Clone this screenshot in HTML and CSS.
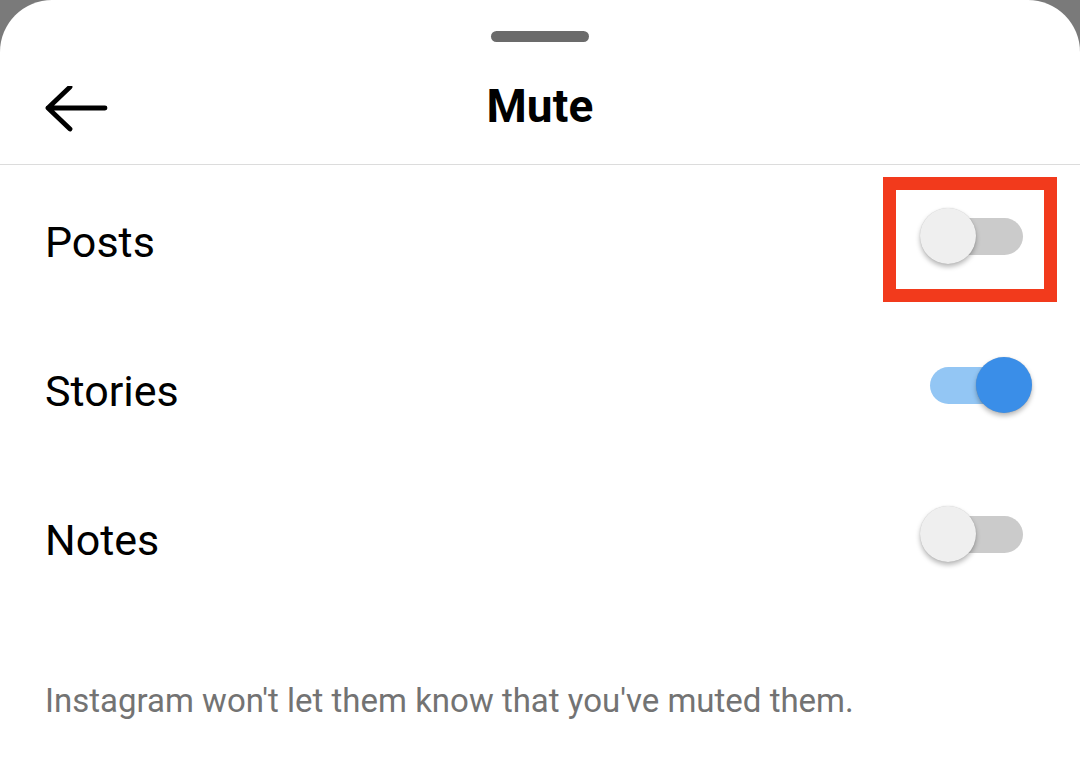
FILE: index.html
```html
<!DOCTYPE html>
<html>
<head>
	<title>Mute</title>
	<meta charset="utf-8">
	<link rel="stylesheet" href="styles.css">
</head>
<body>

	<div class="sheet">
		<div class="handle"></div>

		<div class="header">
			<svg class="back" width="64" height="50" viewBox="0 0 64 50">
				<path d="M3 22 H60 M25 1 L3 22 L25 43" fill="none" stroke="#000" stroke-width="4.8" stroke-linecap="round" stroke-linejoin="round"/>
			</svg>
			<h1>Mute</h1>
		</div>

		<div class="rows">
			<div class="row">
				<span class="label">Posts</span>
				<div class="switch">
					<div class="track"></div>
					<div class="thumb"></div>
					<div class="marker"></div>
				</div>
			</div>
			<div class="row">
				<span class="label">Stories</span>
				<div class="switch on">
					<div class="track"></div>
					<div class="thumb"></div>
				</div>
			</div>
			<div class="row">
				<span class="label">Notes</span>
				<div class="switch">
					<div class="track"></div>
					<div class="thumb"></div>
				</div>
			</div>
		</div>

		<p class="note">Instagram won't let them know that you've muted them.</p>
	</div>

</body>
</html>
```

FILE: styles.css
```css
*, *:before, *:after { box-sizing: border-box; }

html, body { margin: 0; height: 100%; }

body { background-color: #7a7a7a; font-family: Roboto, "Liberation Sans", sans-serif; color: #000; overflow: hidden; }

.sheet {
	background-color: #fff; min-height: 100%;
	border-radius: 52px 52px 0 0;
	padding-top: 31px;
}

.handle { width: 98px; height: 11px; margin: 0 auto; background-color: #6b6b6b; border-radius: 6px; }

/* title bar */
.header {
	position: relative; height: 123px; padding-top: 6px;
	display: flex; align-items: center; justify-content: center;
	border-bottom: 1px solid #dcdcdc;
}
.back { position: absolute; left: 45px; top: 44px; }
.header h1 { margin: 0; font-size: 46px; font-weight: 700; letter-spacing: 0.2px; }

/* toggles */
.rows { padding-top: 2px; }

.row {
	height: 149px; padding: 0 48px 0 45px;
	display: flex; align-items: center; justify-content: space-between;
}
.label { font-size: 43px; }

.switch { position: relative; width: 112px; height: 56px; margin-bottom: 11px; }

.track {
	position: absolute; left: 10px; right: 9px; top: 10px; height: 37px;
	background-color: #cbcbcb; border-radius: 19px;
}
.thumb {
	position: absolute; left: 0; top: 0; width: 56px; height: 56px;
	background-color: #efefef; border-radius: 50%;
	box-shadow: 0 3px 5px rgba(0,0,0,0.28), 0 0 1px rgba(0,0,0,0.2);
}
.switch.on .track { background-color: #93c6f4; }
.switch.on .thumb { left: auto; right: 0; background-color: #3a8ee8; }

.marker {
	position: absolute; left: -37px; top: -31px; width: 174px; height: 125px;
	border: 13px solid #f23a1c;
}

.note { margin: 67px 0 0 45px; font-size: 33px; line-height: 40px; color: #737373; }
```
